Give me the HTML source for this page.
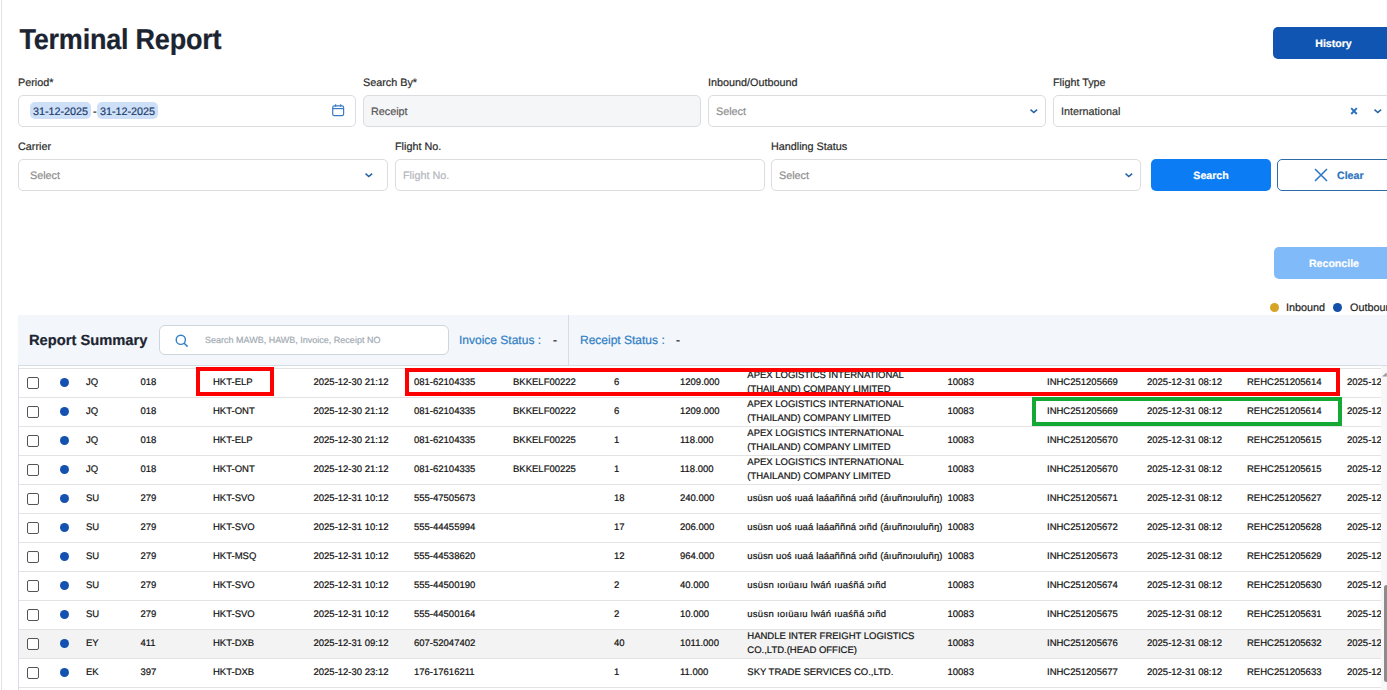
<!DOCTYPE html>
<html><head><meta charset="utf-8">
<style>
*{box-sizing:border-box;margin:0;padding:0}
html,body{width:1387px;height:690px;overflow:hidden;background:#fff;font-family:"Liberation Sans",sans-serif;color:#222;text-rendering:geometricPrecision}
.a{position:absolute}
.lbl{position:absolute;font-size:10.8px;color:#2a2a2a;line-height:12px;white-space:nowrap}
.inp{position:absolute;height:32px;border:1px solid #dadcdf;border-radius:5px;background:#fff}
.ph{position:absolute;left:7px;top:10px;font-size:10.8px;line-height:13px;color:#8e8e8e;white-space:nowrap}
.chev{position:absolute;width:9px;height:6px}
.chip{height:17px;background:#cde0f7;border-radius:5px;font-size:10.8px;line-height:17px;padding-top:2px;color:#1d3d6e;text-align:center;white-space:nowrap}
.btn{position:absolute;height:32px;border-radius:5px;font-weight:bold;font-size:10.6px;color:#fff;text-align:center;line-height:30px;padding-top:2px;white-space:nowrap}
div,span{-webkit-text-stroke:0.2px currentColor}/*TCSS*/.row{position:absolute;left:0;width:1363px;height:29px;border-top:1px solid #e3e3e3}
.c{position:absolute;top:8px;font-size:9.5px;line-height:12px;color:#111;white-space:nowrap}
.c2{position:absolute;top:0px;font-size:9.5px;line-height:14px;color:#111;white-space:nowrap}
.cb{position:absolute;left:8px;top:8px;width:12px;height:12px;border:1.5px solid #555;border-radius:2px;background:#fff}
.dot{position:absolute;left:40.6px;top:8.6px;width:9.6px;height:9.6px;border-radius:50%;background:#1552b0}
/*/TCSS*/</style></head><body>
<div class="a" style="left:1px;top:0;width:1px;height:690px;background:#dfe4ea"></div>
<div class="a" style="left:19.5px;top:24px;font-size:27px;letter-spacing:-0.22px;font-weight:bold;color:#1b2430;line-height:32px;white-space:nowrap;transform:scaleY(1.065);transform-origin:0 25px">Terminal Report</div>
<div class="btn" style="left:1273px;top:27px;width:121px;background:#0f55b1">History</div>

<!-- row 1 labels -->
<div class="lbl" style="left:18px;top:77px">Period*</div>
<div class="lbl" style="left:363px;top:77px">Search By*</div>
<div class="lbl" style="left:708px;top:77px">Inbound/Outbound</div>
<div class="lbl" style="left:1053px;top:77px">Flight Type</div>

<div class="inp" style="left:18px;top:95px;width:338px">
<div class="a chip" style="left:11px;top:6px;width:61px">31-12-2025</div>
<div class="a" style="left:74px;top:10px;font-size:10.8px;line-height:13px;color:#222">-</div>
<div class="a chip" style="left:78px;top:6px;width:61px">31-12-2025</div>
<svg class="a" style="left:313px;top:8.2px" width="13" height="13" viewBox="0 0 13 13"><rect x="0.7" y="1.9" width="10.9" height="9.7" rx="1.6" fill="none" stroke="#3b7bc6" stroke-width="1.2"/><line x1="0.7" y1="4.6" x2="11.6" y2="4.6" stroke="#3b7bc6" stroke-width="1.2"/><line x1="3.6" y1="0.3" x2="3.6" y2="2.8" stroke="#3b7bc6" stroke-width="1.2"/><line x1="8.7" y1="0.3" x2="8.7" y2="2.8" stroke="#3b7bc6" stroke-width="1.2"/></svg>
</div>
<div class="inp" style="left:363px;top:95px;width:338px;background:#f5f6f7"><div class="ph" style="color:#555">Receipt</div></div>
<div class="inp" style="left:708px;top:95px;width:338px"><div class="ph">Select</div><svg class="a" style="left:320px;top:12px" width="10" height="7" viewBox="0 0 10 7"><polyline points="1.5,1.6 4.8,4.6 8.1,1.6" fill="none" stroke="#2762a6" stroke-width="1.5"/></svg></div>
<div class="inp" style="left:1053px;top:95px;width:338px"><div class="ph" style="color:#333">International</div><svg class="a" style="left:296px;top:10.5px" width="9" height="9" viewBox="0 0 9 9"><path d="M1.2 1.2L6.8 7M6.8 1.2L1.2 7" stroke="#2a70bd" stroke-width="1.9"/></svg><svg class="a" style="left:319px;top:12px" width="10" height="7" viewBox="0 0 10 7"><polyline points="1.5,1.6 4.8,4.6 8.1,1.6" fill="none" stroke="#2762a6" stroke-width="1.5"/></svg></div>

<!-- row 2 labels -->
<div class="lbl" style="left:18px;top:141px">Carrier</div>
<div class="lbl" style="left:395px;top:141px">Flight No.</div>
<div class="lbl" style="left:771px;top:141px">Handling Status</div>

<div class="inp" style="left:18px;top:159px;width:370px"><div class="ph" style="left:11px">Select</div><svg class="a" style="left:345px;top:12px" width="10" height="7" viewBox="0 0 10 7"><polyline points="1.5,1.6 4.8,4.6 8.1,1.6" fill="none" stroke="#2762a6" stroke-width="1.5"/></svg></div>
<div class="inp" style="left:395px;top:159px;width:370px"><div class="ph" style="color:#b3b7bc">Flight No.</div></div>
<div class="inp" style="left:771px;top:159px;width:370px"><div class="ph">Select</div><svg class="a" style="left:352px;top:12px" width="10" height="7" viewBox="0 0 10 7"><polyline points="1.5,1.6 4.8,4.6 8.1,1.6" fill="none" stroke="#2762a6" stroke-width="1.5"/></svg></div>
<div class="btn" style="left:1151px;top:159px;width:120px;background:#0b7cf4">Search</div>
<div class="btn" style="left:1277px;top:159px;width:120px;background:#fff;border:1px solid #2e6aa6;color:#2f74c0"><svg class="a" style="left:36px;top:8px" width="14" height="14" viewBox="0 0 14 14"><path d="M1 1L13 13M13 1L1 13" stroke="#2f79c8" stroke-width="1.6"/></svg><span class="a" style="left:59px;top:1px;line-height:30px">Clear</span></div>

<div class="btn" style="left:1274px;top:247px;width:120px;background:#80baf8">Reconcile</div>

<div class="a" style="left:1270px;top:303px;width:9px;height:9px;border-radius:50%;background:#d5a527"></div>
<div class="a" style="left:1286px;top:302px;font-size:10.8px;line-height:12px;color:#222;white-space:nowrap">Inbound</div>
<div class="a" style="left:1333px;top:303px;width:9px;height:9px;border-radius:50%;background:#1450a8"></div>
<div class="a" style="left:1350px;top:302px;font-size:10.8px;line-height:12px;color:#222;white-space:nowrap">Outbound</div>
<div class="a" style="left:18px;top:315px;width:1369px;height:51px;background:#f3f6fa;border-bottom:1px solid #d5dde7"></div>
<div class="a" style="left:29px;top:332px;font-size:14.7px;font-weight:bold;color:#1b2430;line-height:18px;white-space:nowrap">Report Summary</div>
<div class="a" style="left:159px;top:325px;width:290px;height:30px;border:1px solid #cdd5de;border-radius:6px;background:#fff">
<svg class="a" style="left:15px;top:8px" width="14" height="14" viewBox="0 0 14 14"><circle cx="5.8" cy="5.8" r="4.6" fill="none" stroke="#2f7fc8" stroke-width="1.4"/><line x1="9.2" y1="9.2" x2="12.6" y2="12.6" stroke="#2f7fc8" stroke-width="1.5"/></svg>
<div class="a" style="left:45px;top:9px;font-size:9px;line-height:11px;color:#a3abb3;white-space:nowrap">Search MAWB, HAWB, Invoice, Receipt NO</div>
</div>
<div class="a" style="left:459px;top:333px;font-size:12px;line-height:14px;color:#2f7fc5;white-space:nowrap">Invoice Status :</div>
<div class="a" style="left:553px;top:333px;font-size:12px;line-height:14px;color:#222">-</div>
<div class="a" style="left:568px;top:315px;width:1px;height:50px;background:#d5dde7"></div>
<div class="a" style="left:580px;top:333px;font-size:12px;line-height:14px;color:#2f7fc5;white-space:nowrap">Receipt Status :</div>
<div class="a" style="left:676px;top:333px;font-size:12px;line-height:14px;color:#222">-</div>




<!--TABLE-->
<div class="a" style="left:18px;top:366px;width:1363px;height:324px;overflow:hidden;border-left:1px solid #d8dee8">
<div class="row" style="top:2px;background:#fff"><div class="cb"></div><div class="dot"></div><div class="c" style="left:67px">JQ</div><div class="c" style="left:121.5px">018</div><div class="c" style="left:194px">HKT-ELP</div><div class="c" style="left:294.5px">2025-12-30 21:12</div><div class="c" style="left:395px">081-62104335</div><div class="c" style="left:494px">BKKELF00222</div><div class="c" style="left:595px">6</div><div class="c" style="left:661px">1209.000</div><div class="c2" style="left:728.3px">APEX LOGISTICS INTERNATIONAL<br>(THAILAND) COMPANY LIMITED</div><div class="c" style="left:928.5px">10083</div><div class="c" style="left:1028px">INHC251205669</div><div class="c" style="left:1128px">2025-12-31 08:12</div><div class="c" style="left:1228px">REHC251205614</div><div class="c" style="left:1328px">2025-12-31 08:12</div></div>
<div class="row" style="top:31px;background:#fff"><div class="cb"></div><div class="dot"></div><div class="c" style="left:67px">JQ</div><div class="c" style="left:121.5px">018</div><div class="c" style="left:194px">HKT-ONT</div><div class="c" style="left:294.5px">2025-12-30 21:12</div><div class="c" style="left:395px">081-62104335</div><div class="c" style="left:494px">BKKELF00222</div><div class="c" style="left:595px">6</div><div class="c" style="left:661px">1209.000</div><div class="c2" style="left:728.3px">APEX LOGISTICS INTERNATIONAL<br>(THAILAND) COMPANY LIMITED</div><div class="c" style="left:928.5px">10083</div><div class="c" style="left:1028px">INHC251205669</div><div class="c" style="left:1128px">2025-12-31 08:12</div><div class="c" style="left:1228px">REHC251205614</div><div class="c" style="left:1328px">2025-12-31 08:12</div></div>
<div class="row" style="top:60px;background:#fff"><div class="cb"></div><div class="dot"></div><div class="c" style="left:67px">JQ</div><div class="c" style="left:121.5px">018</div><div class="c" style="left:194px">HKT-ELP</div><div class="c" style="left:294.5px">2025-12-30 21:12</div><div class="c" style="left:395px">081-62104335</div><div class="c" style="left:494px">BKKELF00225</div><div class="c" style="left:595px">1</div><div class="c" style="left:661px">118.000</div><div class="c2" style="left:728.3px">APEX LOGISTICS INTERNATIONAL<br>(THAILAND) COMPANY LIMITED</div><div class="c" style="left:928.5px">10083</div><div class="c" style="left:1028px">INHC251205670</div><div class="c" style="left:1128px">2025-12-31 08:12</div><div class="c" style="left:1228px">REHC251205615</div><div class="c" style="left:1328px">2025-12-31 08:12</div></div>
<div class="row" style="top:89px;background:#fff"><div class="cb"></div><div class="dot"></div><div class="c" style="left:67px">JQ</div><div class="c" style="left:121.5px">018</div><div class="c" style="left:194px">HKT-ONT</div><div class="c" style="left:294.5px">2025-12-30 21:12</div><div class="c" style="left:395px">081-62104335</div><div class="c" style="left:494px">BKKELF00225</div><div class="c" style="left:595px">1</div><div class="c" style="left:661px">118.000</div><div class="c2" style="left:728.3px">APEX LOGISTICS INTERNATIONAL<br>(THAILAND) COMPANY LIMITED</div><div class="c" style="left:928.5px">10083</div><div class="c" style="left:1028px">INHC251205670</div><div class="c" style="left:1128px">2025-12-31 08:12</div><div class="c" style="left:1228px">REHC251205615</div><div class="c" style="left:1328px">2025-12-31 08:12</div></div>
<div class="row" style="top:118px;background:#fff"><div class="cb"></div><div class="dot"></div><div class="c" style="left:67px">SU</div><div class="c" style="left:121.5px">279</div><div class="c" style="left:194px">HKT-SVO</div><div class="c" style="left:294.5px">2025-12-31 10:12</div><div class="c" style="left:395px">555-47505673</div><div class="c" style="left:494px"></div><div class="c" style="left:595px">18</div><div class="c" style="left:661px">240.000</div><div class="c" style="left:728.3px"><span style="letter-spacing:0.12px">usüsn uoś ıuaá laáaññná ɔıñd (áıuñnɔıuluñŋ)</span></div><div class="c" style="left:928.5px">10083</div><div class="c" style="left:1028px">INHC251205671</div><div class="c" style="left:1128px">2025-12-31 08:12</div><div class="c" style="left:1228px">REHC251205627</div><div class="c" style="left:1328px">2025-12-31 08:12</div></div>
<div class="row" style="top:147px;background:#fff"><div class="cb"></div><div class="dot"></div><div class="c" style="left:67px">SU</div><div class="c" style="left:121.5px">279</div><div class="c" style="left:194px">HKT-SVO</div><div class="c" style="left:294.5px">2025-12-31 10:12</div><div class="c" style="left:395px">555-44455994</div><div class="c" style="left:494px"></div><div class="c" style="left:595px">17</div><div class="c" style="left:661px">206.000</div><div class="c" style="left:728.3px"><span style="letter-spacing:0.12px">usüsn uoś ıuaá laáaññná ɔıñd (áıuñnɔıuluñŋ)</span></div><div class="c" style="left:928.5px">10083</div><div class="c" style="left:1028px">INHC251205672</div><div class="c" style="left:1128px">2025-12-31 08:12</div><div class="c" style="left:1228px">REHC251205628</div><div class="c" style="left:1328px">2025-12-31 08:12</div></div>
<div class="row" style="top:176px;background:#fff"><div class="cb"></div><div class="dot"></div><div class="c" style="left:67px">SU</div><div class="c" style="left:121.5px">279</div><div class="c" style="left:194px">HKT-MSQ</div><div class="c" style="left:294.5px">2025-12-31 10:12</div><div class="c" style="left:395px">555-44538620</div><div class="c" style="left:494px"></div><div class="c" style="left:595px">12</div><div class="c" style="left:661px">964.000</div><div class="c" style="left:728.3px"><span style="letter-spacing:0.12px">usüsn uoś ıuaá laáaññná ɔıñd (áıuñnɔıuluñŋ)</span></div><div class="c" style="left:928.5px">10083</div><div class="c" style="left:1028px">INHC251205673</div><div class="c" style="left:1128px">2025-12-31 08:12</div><div class="c" style="left:1228px">REHC251205629</div><div class="c" style="left:1328px">2025-12-31 08:12</div></div>
<div class="row" style="top:205px;background:#fff"><div class="cb"></div><div class="dot"></div><div class="c" style="left:67px">SU</div><div class="c" style="left:121.5px">279</div><div class="c" style="left:194px">HKT-SVO</div><div class="c" style="left:294.5px">2025-12-31 10:12</div><div class="c" style="left:395px">555-44500190</div><div class="c" style="left:494px"></div><div class="c" style="left:595px">2</div><div class="c" style="left:661px">40.000</div><div class="c" style="left:728.3px"><span style="letter-spacing:0.27px">usüsn ıoıüaıu lwáń ıuaśñá ɔıñd</span></div><div class="c" style="left:928.5px">10083</div><div class="c" style="left:1028px">INHC251205674</div><div class="c" style="left:1128px">2025-12-31 08:12</div><div class="c" style="left:1228px">REHC251205630</div><div class="c" style="left:1328px">2025-12-31 08:12</div></div>
<div class="row" style="top:234px;background:#fff"><div class="cb"></div><div class="dot"></div><div class="c" style="left:67px">SU</div><div class="c" style="left:121.5px">279</div><div class="c" style="left:194px">HKT-SVO</div><div class="c" style="left:294.5px">2025-12-31 10:12</div><div class="c" style="left:395px">555-44500164</div><div class="c" style="left:494px"></div><div class="c" style="left:595px">2</div><div class="c" style="left:661px">10.000</div><div class="c" style="left:728.3px"><span style="letter-spacing:0.27px">usüsn ıoıüaıu lwáń ıuaśñá ɔıñd</span></div><div class="c" style="left:928.5px">10083</div><div class="c" style="left:1028px">INHC251205675</div><div class="c" style="left:1128px">2025-12-31 08:12</div><div class="c" style="left:1228px">REHC251205631</div><div class="c" style="left:1328px">2025-12-31 08:12</div></div>
<div class="row" style="top:263px;background:#f3f3f3"><div class="cb"></div><div class="dot"></div><div class="c" style="left:67px">EY</div><div class="c" style="left:121.5px">411</div><div class="c" style="left:194px">HKT-DXB</div><div class="c" style="left:294.5px">2025-12-31 09:12</div><div class="c" style="left:395px">607-52047402</div><div class="c" style="left:494px"></div><div class="c" style="left:595px">40</div><div class="c" style="left:661px">1011.000</div><div class="c2" style="left:728.3px">HANDLE INTER FREIGHT LOGISTICS<br>CO.,LTD.(HEAD OFFICE)</div><div class="c" style="left:928.5px">10083</div><div class="c" style="left:1028px">INHC251205676</div><div class="c" style="left:1128px">2025-12-31 08:12</div><div class="c" style="left:1228px">REHC251205632</div><div class="c" style="left:1328px">2025-12-31 08:12</div></div>
<div class="row" style="top:292px;background:#fff"><div class="cb"></div><div class="dot"></div><div class="c" style="left:67px">EK</div><div class="c" style="left:121.5px">397</div><div class="c" style="left:194px">HKT-DXB</div><div class="c" style="left:294.5px">2025-12-30 23:12</div><div class="c" style="left:395px">176-17616211</div><div class="c" style="left:494px"></div><div class="c" style="left:595px">1</div><div class="c" style="left:661px">11.000</div><div class="c" style="left:728.3px">SKY TRADE SERVICES CO.,LTD.</div><div class="c" style="left:928.5px">10083</div><div class="c" style="left:1028px">INHC251205677</div><div class="c" style="left:1128px">2025-12-31 08:12</div><div class="c" style="left:1228px">REHC251205633</div><div class="c" style="left:1328px">2025-12-31 08:12</div></div>
<div class="a" style="left:0;top:321px;width:1363px;height:1px;background:#e3e3e3"></div>
</div>
<div class="a" style="left:1381px;top:366px;width:6px;height:324px;background:#f7f7f7"></div>
<svg class="a" style="left:1382px;top:372px" width="5" height="5" viewBox="0 0 5 5"><path d="M0 4.5L4.5 0.5L5 4.5Z" fill="#9a9a9a"/></svg>
<div class="a" style="left:1384px;top:585px;width:5px;height:97px;background:#8c8c8c;border-radius:3px"></div>
<div class="a" style="left:196px;top:367px;width:78px;height:29px;border:4px solid #f00"></div>
<div class="a" style="left:405px;top:368px;width:935px;height:28px;border:4px solid #f00"></div>
<div class="a" style="left:1032px;top:397px;width:310px;height:29px;border:4px solid #14a834"></div>
<!--/TABLE-->
</body></html>
